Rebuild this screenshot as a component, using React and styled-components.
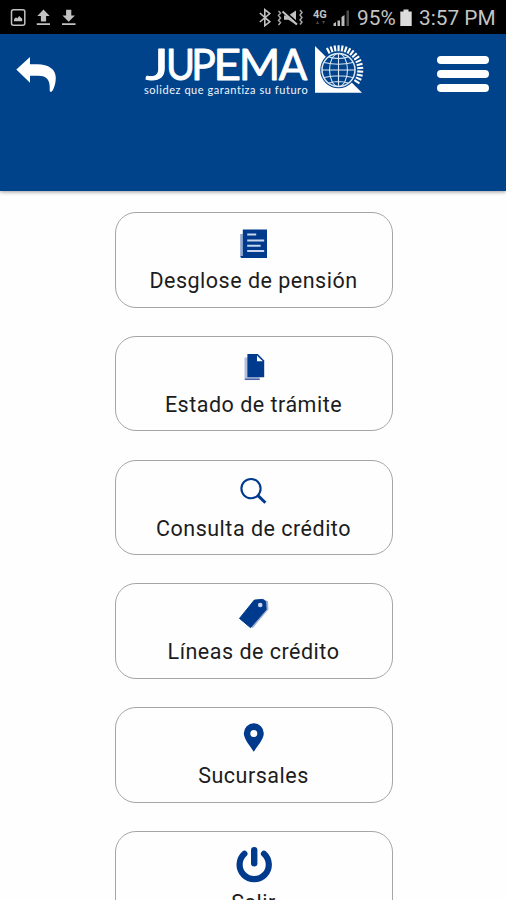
import React from "react";
import styled, { createGlobalStyle } from "styled-components";

const NAVY = "#003a8c";

const menuItems = [
  { label: "Desglose de pensión", icon: "news" },
  { label: "Estado de trámite", icon: "copy" },
  { label: "Consulta de crédito", icon: "search" },
  { label: "Líneas de crédito", icon: "tag" },
  { label: "Sucursales", icon: "pin" },
  { label: "Salir", icon: "power", iconSpace: 6 },
];

const icons = {
  news: (
    <>
      <path d="M6.2 10h2.6v24H8a2 2 0 0 1-1.8-2z" fill="#8ea6cf" />
      <path d="M8.8 5.5H33V34H8q-1.6-.2-1.6-2h2.4z" fill={NAVY} />
      <path
        d="M13.2 10.5h9M13.2 16.5h17M13.2 21.7h13.4M13.2 27h17"
        stroke="#c9d6ee"
        strokeWidth="1.9"
      />
    </>
  ),
  copy: (
    <>
      <path d="M10.5 9.5h4v19.5h11v3h-15z" fill="#b3c0de" />
      <path d="M11 31.3h14.7" stroke="#4c66a8" strokeWidth="1.5" />
      <path d="M13.4 6h10.4L30.2 12.600V29.200H13.4z" fill={NAVY} />
      <path d="M23 7.500v5.800h5.800z" fill="#fff" />
    </>
  ),
  search: (
    <>
      <circle cx="17" cy="16.6" r="9.6" fill="#fff" stroke={NAVY} strokeWidth="2.1" />
      <path d="M23.800 23.4l7.600 7.4" stroke={NAVY} strokeWidth="3" />
    </>
  ),
  tag: (
    <>
      <path d="M29 4l5 2.3.4 8.3L18.8 33l-3-1L31.5 14z" fill="#9aadd4" />
      <path
        d="M20.3 5.1l8.5-.7 2.8 2.2.5 8L16.4 32.6 5.5 23.4z"
        fill={NAVY}
        stroke={NAVY}
        strokeLinejoin="round"
      />
      <circle cx="26.2" cy="10" r="2.3" fill="#c9d6ee" />
    </>
  ),
  pin: (
    <path
      d="M19.8 4.2a10 10 0 0 1 10 10c0 6-6.500 12.800-10 18.600-3.500-5.800-10-12.600-10-18.600a10 10 0 0 1 10-10zm0 6.900a3.500 3.500 0 1 0 0 7 3.500 3.500 0 0 0 0-7z"
      fill={NAVY}
      fillRule="evenodd"
    />
  ),
  power: (
    <g fill="none" stroke={NAVY} strokeLinecap="round">
      <path d="M10.4 10.8a14.600 14.600 0 1 0 19.600 0" strokeWidth="6.2" />
      <path d="M20.2 7.2v13" strokeWidth="6.4" />
    </g>
  ),
};

// the wordmark letters are drawn wider or narrower than the font has them
const letters = [
  { char: "J", x: 5.5, stretch: 1.28 },
  { char: "U", x: 26, stretch: 0.92 },
  { char: "P", x: 51.2, stretch: 0.95 },
  { char: "E", x: 73.2, stretch: 1.12 },
  { char: "M", x: 98.8, stretch: 1.04 },
  { char: "A", x: 138.8, stretch: 0.98 },
];

const StatusLeft = () => (
  <svg width="80" height="34" viewBox="0 0 80 34">
    <rect x="11.5" y="9.8" width="13.3" height="15.4" rx="2" fill="none" stroke="#c2c2c2" strokeWidth="1.5" />
    <path d="M14 21.2v-2l2-2 1.300 1.300 1.800-2.500 1.400 1.300 1.700 1.500v2.400z" fill="#c2c2c2" />
    <path d="M43.5 9.500l6.200 6.500h-3.600v5.500h-5.200V16h-3.600zM36.800 23.300H50V25H36.800z" fill="#c2c2c2" />
    <path d="M68.7 21.800l-6.200-6.300h3.600V9.800h5.200v5.700h3.600zM62 23.300h13.500V25H62z" fill="#c2c2c2" />
  </svg>
);

const StatusRight = () => (
  <svg width="92" height="34" viewBox="258 0 92 34">
    <path
      d="M259.8 13l10 8.800-5 3.800V9.600l5 4-10 8.400"
      fill="none"
      stroke="#c2c2c2"
      strokeWidth="1.6"
    />
    <path d="M284 15.5h4.500l7.500-5v14.200l-7.500-5H284z" fill="#c2c2c2" />
    <path d="M282 10l16 14" stroke="#000" strokeWidth="3" />
    <path d="M282.5 11.5l14.500 13" stroke="#c2c2c2" strokeWidth="2" />
    <path
      d="M278.5 11l2 2-2 2.500 2 2.500-2 2.500 2 2-2 2.500M300 10l2 2.500-2 2.500 2 2.500-2 2.500 2 2-2 2.500"
      fill="none"
      stroke="#a5a5a5"
      strokeWidth="1.5"
    />
    <text x="313" y="17.5" fontSize="11" fontWeight="700" fill="#c2c2c2" fontFamily="Roboto, sans-serif">
      4G
    </text>
    <path d="M317.5 21l-1.500 3h3zM323.500 24l-1.500-3h3z" fill="#4c4c4c" />
    <path d="M333.5 26v-2.500l2.500-1.500v4zM337.500 26v-5.500h2.500V26zM341.500 26v-9l3-2v11z" fill="#bcbcbc" />
    <path d="M346.5 10.5h2.500V26h-2.500z" fill="#4c4c4c" />
  </svg>
);

const Battery = () => (
  <svg width="12" height="34" viewBox="0 0 12 34">
    <path d="M.3 11.5H3.500V9.500h5v2h3.200V26H.3z" fill="#dcdcdc" />
  </svg>
);

const BackArrow = () => (
  <svg width="44" height="40" viewBox="14 54 44 40">
    <path
      d="M16.3 69.5L30 57v7.200h7.500c11 0 18.500 5 18.300 14-.1 6-2 10.500-3.900 13.300-1.200.8-2.200.2-2.200-1.200.6-10-2.500-14.500-11.700-14.500h-8v7z"
      fill="#fff"
    />
  </svg>
);

// sun rays run clockwise from the upper left of the globe to its lower right
const rays = Array.from({ length: 17 }, (_, i) => -118 + i * 9.4);

const Emblem = () => (
  <svg width="50" height="60" viewBox="174 0 50 60">
    <path d="M175 6l47 46.8h-47z" fill="#fff" />
    <circle cx="198.5" cy="30" r="18.3" fill="#00438a" />
    {rays.map((angle) => (
      <path
        key={angle}
        d="M217.3 30h6"
        stroke="#fff"
        strokeWidth="2.1"
        transform={`rotate(${angle} 198.5 30)`}
      />
    ))}
    <g fill="none" stroke="#dce7f5" strokeWidth="1.1">
      <circle cx="198.5" cy="30" r="16.5" strokeWidth="1.5" />
      <ellipse cx="198.5" cy="30" rx="9" ry="16.5" />
      <path d="M198.5 13.5v33M182 30h33M184 22.500q14.500 3.500 29 0M184 37.500q14.500-3.500 29 0M189 17q9.500 3 19 0M189 43q9.500-3 19 0" />
    </g>
  </svg>
);

const Logo = () => (
  <LogoRow>
    <LogoWords>
      <Wordmark viewBox="0 0 170 44">
        {letters.map(({ char, x, stretch }) => (
          <text key={char} y="40" transform={`translate(${x} 0) scale(${stretch} 1)`}>
            {char}
          </text>
        ))}
      </Wordmark>
      <Tagline>solidez que garantiza su futuro</Tagline>
    </LogoWords>
    <Emblem />
  </LogoRow>
);

const App = () => (
  <>
    <GlobalStyle />
    <Screen>
      <StatusBar>
        <StatusLeft />
        <StatusInfo>
          <StatusRight />
          <Percent>95%</Percent>
          <Battery />
          <Clock>3:57 PM</Clock>
        </StatusInfo>
      </StatusBar>
      <Header>
        <BackButton>
          <BackArrow />
        </BackButton>
        <Logo />
        <MenuButton>
          <MenuLine />
          <MenuLine />
          <MenuLine />
        </MenuButton>
      </Header>
      <Menu>
        {menuItems.map(({ label, icon, iconSpace = 3 }) => (
          <Card key={label}>
            <CardIcon viewBox="0 0 40 40">{icons[icon]}</CardIcon>
            <Label $iconSpace={iconSpace}>{label}</Label>
          </Card>
        ))}
      </Menu>
    </Screen>
  </>
);

export default App;

const GlobalStyle = createGlobalStyle`
  * {
    box-sizing: border-box;
  }
  body {
    margin: 0;
    background: #fff;
    font-family: Roboto, sans-serif;
  }
  svg {
    display: block;
    flex-shrink: 0;
  }
`;

const Screen = styled.div`
  height: 900px;
  overflow: hidden;
  display: flex;
  flex-direction: column;
  background: #fefefe;
`;

const StatusBar = styled.div`
  height: 34px;
  flex-shrink: 0;
  display: flex;
  justify-content: space-between;
  background: #000;
`;

const StatusInfo = styled.div`
  display: flex;
  align-items: center;
  padding-right: 10px;
`;

const StatusText = styled.span`
  font-size: 20.8px;
  line-height: 34px;
  padding-top: 1px;
  white-space: nowrap;
  color: #c4c4c4;
`;

const Percent = styled(StatusText)`
  width: 43px;
  margin-left: 7px;
`;

const Clock = styled(StatusText)`
  width: 77px;
  margin-left: 7px;
`;

const Header = styled.header`
  height: 157px;
  flex-shrink: 0;
  display: flex;
  align-items: flex-start;
  padding: 6px 17px 0 14px;
  background: #00438a;
  box-shadow: 0 1px 4px rgba(0, 0, 0, 0.4);
`;

const BackButton = styled.button`
  width: 126px;
  padding: 14px 0 0;
  border: none;
  background: none;
`;

const LogoRow = styled.div`
  display: flex;
`;

const LogoWords = styled.div`
  width: 174px;
`;

const Wordmark = styled.svg`
  width: 170px;
  height: 44px;
  overflow: visible;
  font-family: Lato, sans-serif;
  font-size: 43px;
  fill: #fff;
  stroke: #fff;
  stroke-width: 0.9px;
  stroke-linejoin: round;
`;

const Tagline = styled.div`
  padding-left: 4px;
  font-family: Lato, sans-serif;
  font-size: 11px;
  line-height: 12px;
  letter-spacing: 0.55px;
  white-space: nowrap;
  color: #f2f6ff;
`;

const MenuButton = styled.button`
  display: flex;
  flex-direction: column;
  gap: 5.5px;
  margin-left: auto;
  padding: 16px 0 0;
  border: none;
  background: none;
`;

const MenuLine = styled.span`
  width: 52px;
  height: 8.3px;
  border-radius: 4px;
  background: #fff;
`;

const Menu = styled.main`
  display: flex;
  flex-direction: column;
  align-items: center;
  gap: 28.3px;
  padding: 21px 0 0 1px;
`;

const Card = styled.div`
  width: 278px;
  height: 95.5px;
  flex-shrink: 0;
  display: flex;
  flex-direction: column;
  align-items: center;
  padding-top: 11px;
  border: 1px solid #a6a6a6;
  border-radius: 21px;
`;

const CardIcon = styled.svg`
  width: 40px;
  height: 40px;
`;

const Label = styled.span`
  margin-top: ${(props) => props.$iconSpace}px;
  font-size: 21.5px;
  line-height: 28px;
  letter-spacing: 0.5px;
  color: #1c1c1c;
`;
